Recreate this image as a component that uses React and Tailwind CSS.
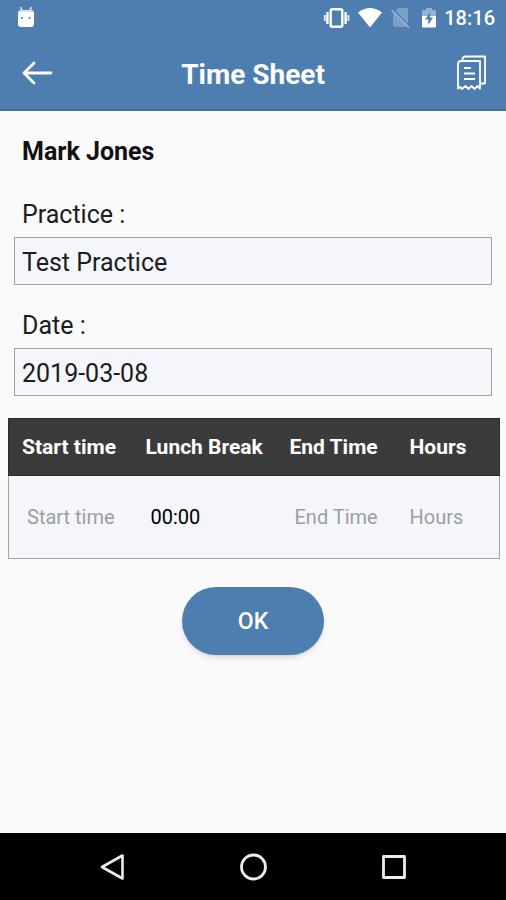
import React, { useState } from 'react';

const StatusBar = () => {
  return (
    <div className="flex h-9 items-center justify-between pl-[17px] pr-[11px]">
      <svg width="18" height="22" viewBox="0 0 18 22" aria-hidden="true">
        <path d="M3.5 0l2 4M14.5 0l-2 4" stroke="#c3d6ea" strokeWidth="1.8" />
        <path d="M1 6q0-3 3-3h10q3 0 3 3z" fill="#d5e3f1" />
        <path d="M1 5h16v12q0 3-3 3H4q-3 0-3-3z" fill="#fff" />
        <circle cx="5" cy="11" r="1" fill="#4e7db0" />
        <circle cx="12.5" cy="11" r="1" fill="#4e7db0" />
      </svg>

      <div className="flex items-center">
        {/* vibrate */}
        <svg width="28" height="22" viewBox="0 0 28 22" aria-hidden="true">
          <rect x="8.7" y="2.2" width="11.6" height="17.6" rx="1.5" fill="none" stroke="#fff" strokeWidth="2.4" />
          <path d="M5.4 5v12M23.6 5v12" stroke="#fff" strokeWidth="2.4" />
          <path d="M2.8 8v6M26.4 8v6" stroke="#dbe7f3" strokeWidth="2" />
        </svg>
        {/* wifi */}
        <svg className="ml-2" width="24" height="22" viewBox="0 0 24 22" aria-hidden="true">
          <path d="M0 5.5Q12-3.5 24 5.5L12 20.5z" fill="#fff" />
        </svg>
        {/* no sim */}
        <svg className="ml-2" width="22" height="22" viewBox="0 0 22 22" aria-hidden="true">
          <path d="M3 7L8.5 1H16q2 0 2 2v15.5q0 1.5-2 1.5H5q-2 0-2-2z" fill="#7c9fc6" />
          <path d="M2.8 2.2L20 20" stroke="#4e7db0" strokeWidth="1.6" />
          <path d="M1.5 3L19 20.8" stroke="#9db7d4" strokeWidth="1.6" />
        </svg>
        {/* charging battery */}
        <svg className="ml-[10px]" width="14" height="22" viewBox="0 0 14 22" aria-hidden="true">
          <path d="M4 1h6v2h3q1 0 1 1v5H0V4q0-1 1-1h3z" fill="#95b1d0" />
          <path d="M0 9h14v10.5q0 1-1 1H1q-1 0-1-1z" fill="#fff" />
          <path d="M8.5 5L3 12.5h3.4V18L11 10.5H8z" fill="#4e7db0" />
        </svg>
        <span className="ml-2 text-[20px] leading-6 font-medium">18:16</span>
      </div>
    </div>
  );
};

const Header = () => {
  return (
    <header className="border-b-2 border-[#4173aa] bg-[#4e7db0] text-white">
      <StatusBar />
      <div className="grid h-[73px] grid-cols-[1fr_auto_1fr] items-center px-5">
        <button type="button" aria-label="Back" className="justify-self-start">
          <svg width="34" height="26" viewBox="0 0 34 26" fill="none" stroke="#fff" strokeWidth="2.8" strokeLinecap="round" strokeLinejoin="round">
            <path d="M31 13H4M14 3L4 13l10 10" />
          </svg>
        </button>
        <h1 className="pt-1 text-[28px] leading-8 font-bold">Time Sheet</h1>
        <button type="button" aria-label="Time sheets" className="justify-self-end">
          <svg width="30" height="36" viewBox="0 0 30 36" fill="none" stroke="#fff" strokeWidth="1.8" strokeLinejoin="round">
            <path d="M2 33.5V9Q2 6 5 6H24V33.5L21.5 31L18.5 34L15.5 31L12.5 34L9.5 31L6 34L4 32z" />
            <path d="M6.5 5.5V4.5Q6.5 1.5 9.5 1.5H29V28.5H24.5" />
            <path d="M8 13h7M8 18.5h11M8 24h11" strokeWidth="2" />
          </svg>
        </button>
      </div>
    </header>
  );
};

const Field = ({ id, label, value, onChange }) => {
  return (
    <div className="px-[14px]">
      <label htmlFor={id} className="mb-[6px] block px-2 text-[25px] leading-8 text-[#1c1c1c]">
        {label}
      </label>
      <input
        id={id}
        type="text"
        value={value}
        onChange={(e) => onChange(e.target.value)}
        className="h-12 w-full border border-[#a3a3a3] bg-[#f4f6fb] px-[7px] pt-[2px] text-[25px] text-[#1c1c1c] outline-none"
      />
    </div>
  );
};

const cellInput = 'w-full bg-transparent text-[20px] text-black outline-none placeholder:text-[#9c9ea1]';

const TimeTable = () => {
  const [row, setRow] = useState({ start: '', lunch: '00:00', end: '', hours: '' });

  const update = (key) => (e) => setRow({ ...row, [key]: e.target.value });

  return (
    <div className="mt-[22px] pr-[6px] pl-2">
      <table className="w-full table-fixed border-collapse border border-[#a3a3a3] bg-[#f4f6fb]">
        <thead>
          <tr className="h-[57px] border border-[#2b2b2b] bg-[#3b3b3b] text-left text-[21px] text-white">
            <th className="w-[124px] pt-[2px] pl-[13px] font-bold whitespace-nowrap">Start time</th>
            <th className="w-[144px] pt-[2px] pl-[13px] font-bold whitespace-nowrap">Lunch Break</th>
            <th className="w-[120px] pt-[2px] pl-[13px] font-bold whitespace-nowrap">End Time</th>
            <th className="pt-[2px] pl-[13px] font-bold whitespace-nowrap">Hours</th>
          </tr>
        </thead>
        <tbody>
          <tr className="h-[83px]">
            <td className="pl-[18px]">
              <input type="text" aria-label="Start time" placeholder="Start time" value={row.start} onChange={update('start')} className={cellInput} />
            </td>
            <td className="pl-[18px]">
              <input type="text" aria-label="Lunch Break" value={row.lunch} onChange={update('lunch')} className={cellInput} />
            </td>
            <td className="pl-[18px]">
              <input type="text" aria-label="End Time" placeholder="End Time" value={row.end} onChange={update('end')} className={cellInput} />
            </td>
            <td className="pl-[13px]">
              <input type="text" aria-label="Hours" placeholder="Hours" value={row.hours} onChange={update('hours')} className={cellInput} />
            </td>
          </tr>
        </tbody>
      </table>
    </div>
  );
};

const NavBar = () => {
  return (
    <nav className="flex h-[67px] items-center justify-center gap-[108px] bg-black">
      <button type="button" aria-label="Back">
        <svg width="32" height="32" viewBox="0 0 32 32" fill="none" stroke="#ececec" strokeWidth="2.6" strokeLinejoin="round">
          <path d="M25.5 4.5v23L5 16z" />
        </svg>
      </button>
      <button type="button" aria-label="Home">
        <svg width="32" height="32" viewBox="0 0 32 32" fill="none" stroke="#ececec" strokeWidth="2.8">
          <circle cx="16.5" cy="16" r="12" />
        </svg>
      </button>
      <button type="button" aria-label="Recent apps">
        <svg width="32" height="32" viewBox="0 0 32 32" fill="none" stroke="#ececec" strokeWidth="2.8" strokeLinejoin="round">
          <rect x="6.5" y="5.5" width="21" height="21" />
        </svg>
      </button>
    </nav>
  );
};

const App = () => {
  const [practice, setPractice] = useState('Test Practice');
  const [date, setDate] = useState('2019-03-08');

  return (
    <div className="flex min-h-screen flex-col bg-[#fafafa] font-[Roboto,sans-serif]">
      <Header />
      <main className="flex-1 pt-[25px]">
        <h2 className="mb-[31px] px-[22px] text-[25px] leading-8 font-bold text-[#111]">Mark Jones</h2>
        <div className="flex flex-col gap-[25px]">
          <Field id="practice" label="Practice :" value={practice} onChange={setPractice} />
          <Field id="date" label="Date :" value={date} onChange={setDate} />
        </div>
        <TimeTable />
        <div className="mt-7 flex justify-center">
          <button
            type="button"
            className="h-[68px] w-[142px] rounded-full bg-[#4e7db0] pt-[2px] text-[23px] font-medium text-white shadow-md"
          >
            OK
          </button>
        </div>
      </main>
      <NavBar />
    </div>
  );
};

export default App;
